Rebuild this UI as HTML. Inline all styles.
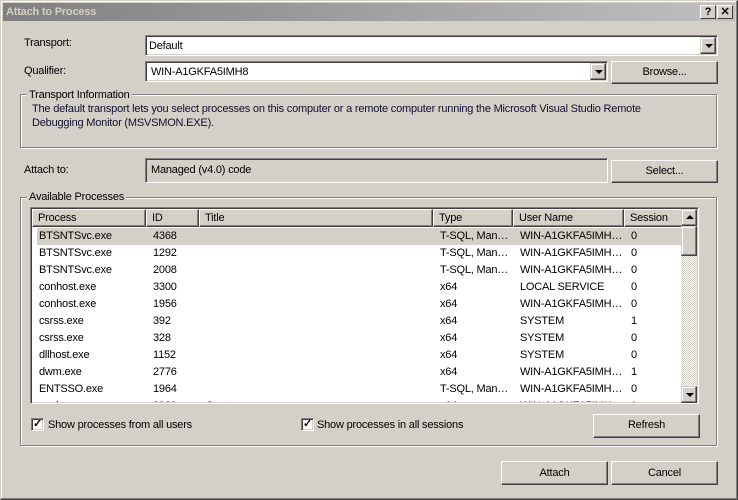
<!DOCTYPE html>
<html><head><meta charset="utf-8"><style>
*{margin:0;padding:0;box-sizing:border-box}
body{width:738px;height:500px;background:#d4d0c8;font:11px "Liberation Sans",sans-serif;letter-spacing:-0.2px;color:#000;position:relative;overflow:hidden}
.a{position:absolute;white-space:nowrap}
.win{position:absolute;left:0;top:0;width:738px;height:500px;border-top:1px solid #d4d0c8;border-left:1px solid #d4d0c8;border-right:1px solid #404040;border-bottom:1px solid #404040;box-shadow:inset -1px -1px 0 #808080,inset 1px 1px 0 #fff}
.title{position:absolute;left:3px;top:3px;width:732px;height:18px;background:linear-gradient(90deg,#808080,#c0c0c0);color:#d4d0c8;font-weight:bold;font-size:11px;line-height:18px;padding-left:3px}
.tb{position:absolute;top:5px;width:16px;height:14px;background:#d4d0c8;border-top:1px solid #fff;border-left:1px solid #fff;border-right:1px solid #404040;border-bottom:1px solid #404040;font-weight:bold;font-size:11px;line-height:12px;text-align:center;color:#000}
.sunk{position:absolute;background:#fff;border-top:1px solid #808080;border-left:1px solid #808080;border-right:1px solid #fff;border-bottom:1px solid #fff;box-shadow:inset 1px 1px 0 #404040,inset -1px -1px 0 #d4d0c8}
.btn{position:absolute;background:#d4d0c8;border-top:1px solid #fff;border-left:1px solid #fff;border-right:1px solid #404040;border-bottom:1px solid #404040;box-shadow:inset -1px -1px 0 #808080;text-align:center}
.arr{position:absolute;width:16px;background:#d4d0c8;border-top:1px solid #d4d0c8;border-left:1px solid #d4d0c8;border-right:1px solid #404040;border-bottom:1px solid #404040;box-shadow:inset -1px -1px 0 #808080,inset 1px 1px 0 #fff}
.tri{position:absolute;left:4px;width:0;height:0;border-left:4px solid transparent;border-right:4px solid transparent}
.grp{position:absolute;border:1px solid #808080;box-shadow:1px 1px 0 #fff,inset 1px 1px 0 #fff}
.leg{position:absolute;background:#d4d0c8;padding:0 2px;line-height:12px}
.hd{position:absolute;top:0;height:18px;line-height:17px;padding-left:5px;border-top:1px solid #fff;border-left:1px solid #fff;border-right:1px solid #404040;border-bottom:1px solid #404040;box-shadow:inset -1px -1px 0 #808080;background:#d4d0c8}
.row{position:absolute;left:2px;height:17px;line-height:17px;width:649px}
.row span{position:absolute}
.cb{position:absolute;width:13px;height:13px;background:#fff;border-top:1px solid #808080;border-left:1px solid #808080;border-right:1px solid #fff;border-bottom:1px solid #fff;box-shadow:inset 1px 1px 0 #404040,inset -1px -1px 0 #d4d0c8}
</style></head><body>
<div class="win"></div>
<div class="title">Attach to Process</div>
<div class="tb" style="left:700px">?</div>
<div class="tb" style="left:717px">✕</div>

<div class="a" style="left:24px;top:37px">Transport:</div>
<div class="sunk" style="left:145px;top:35px;width:573px;height:21px"><div class="a" style="left:3px;top:4px">Default</div>
<div class="arr" style="right:1px;top:1px;height:17px"><div class="tri" style="top:6px;border-top:4px solid #000"></div></div></div>

<div class="a" style="left:24px;top:65px">Qualifier:</div>
<div class="sunk" style="left:145px;top:61px;width:463px;height:21px"><div class="a" style="left:5px;top:4px">WIN-A1GKFA5IMH8</div>
<div class="arr" style="right:1px;top:1px;height:17px"><div class="tri" style="top:6px;border-top:4px solid #000"></div></div></div>
<div class="btn" style="left:611px;top:61px;width:107px;height:23px;line-height:21px">Browse...</div>

<div class="grp" style="left:20px;top:94px;width:697px;height:54px"></div>
<div class="leg" style="left:27px;top:89px">Transport Information</div>
<div class="a" style="left:32px;top:103px;color:#101030">The default transport lets you select processes on this computer or a remote computer running the Microsoft Visual Studio Remote</div>
<div class="a" style="left:32px;top:117px;color:#101030">Debugging Monitor (MSVSMON.EXE).</div>

<div class="a" style="left:24px;top:164px">Attach to:</div>
<div class="sunk" style="left:145px;top:158px;width:463px;height:25px;background:#d4d0c8"><div class="a" style="left:5px;top:5px">Managed (v4.0) code</div></div>
<div class="btn" style="left:611px;top:160px;width:107px;height:23px;line-height:21px">Select...</div>

<div class="grp" style="left:20px;top:197px;width:697px;height:249px"></div>
<div class="leg" style="left:27px;top:191px">Available Processes</div>

<div class="sunk" style="left:30px;top:207px;width:669px;height:197px;overflow:hidden">
<div style="position:absolute;left:1px;top:1px;width:650px;height:193px;overflow:hidden">
<div class="hd" style="left:0;width:114px">Process</div>
<div class="hd" style="left:114px;width:53px">ID</div>
<div class="hd" style="left:167px;width:234px">Title</div>
<div class="hd" style="left:401px;width:80px">Type</div>
<div class="hd" style="left:481px;width:111px">User Name</div>
<div class="hd" style="left:592px;width:70px">Session</div>
<div class="row" style="top:19px;left:5px;width:645px;background:#d4d0c8"></div>
<div id="rows"></div>
</div>
<div class="arr" style="left:650px;top:1px;height:17px"><div class="tri" style="top:5px;border-bottom:4px solid #000"></div></div>
<div style="position:absolute;left:650px;top:18px;width:16px;height:161px;background:repeating-conic-gradient(#d4d0c8 0 25%,#fff 0 50%) 0 0/2px 2px"></div>
<div class="arr" style="left:650px;top:18px;height:30px"></div>
<div class="arr" style="left:650px;top:178px;height:17px"><div class="tri" style="top:6px;border-top:4px solid #000"></div></div>
</div>

<div class="cb" style="left:31px;top:418px"><div class="a" style="left:1px;top:-2px;font-size:11px;font-weight:bold">✓</div></div>
<div class="a" style="left:48px;top:419px">Show processes from all users</div>
<div class="cb" style="left:301px;top:418px"><div class="a" style="left:1px;top:-2px;font-size:11px;font-weight:bold">✓</div></div>
<div class="a" style="left:317px;top:419px">Show processes in all sessions</div>
<div class="btn" style="left:593px;top:414px;width:107px;height:24px;line-height:21px">Refresh</div>

<div class="btn" style="left:501px;top:461px;width:107px;height:24px;line-height:22px">Attach</div>
<div class="btn" style="left:611px;top:461px;width:107px;height:24px;line-height:22px">Cancel</div>

<script>
var d=[["BTSNTSvc.exe","4368","","T-SQL, Man…","WIN-A1GKFA5IMH…","0"],
["BTSNTSvc.exe","1292","","T-SQL, Man…","WIN-A1GKFA5IMH…","0"],
["BTSNTSvc.exe","2008","","T-SQL, Man…","WIN-A1GKFA5IMH…","0"],
["conhost.exe","3300","","x64","LOCAL SERVICE","0"],
["conhost.exe","1956","","x64","WIN-A1GKFA5IMH…","0"],
["csrss.exe","392","","x64","SYSTEM","1"],
["csrss.exe","328","","x64","SYSTEM","0"],
["dllhost.exe","1152","","x64","SYSTEM","0"],
["dwm.exe","2776","","x64","WIN-A1GKFA5IMH…","1"],
["ENTSSO.exe","1964","","T-SQL, Man…","WIN-A1GKFA5IMH…","0"],
["explorer.exe","2980","Start","x64","WIN-A1GKFA5IMH…","1"]];
var x=[5,119,172,406,486,597],h="";
d.forEach(function(r,i){h+='<div class="row" style="top:'+(19+i*17)+'px">';r.forEach(function(c,j){h+='<span style="left:'+x[j]+'px">'+c+'</span>'});h+='</div>'});
document.getElementById('rows').outerHTML=h;
</script>
</body></html>
